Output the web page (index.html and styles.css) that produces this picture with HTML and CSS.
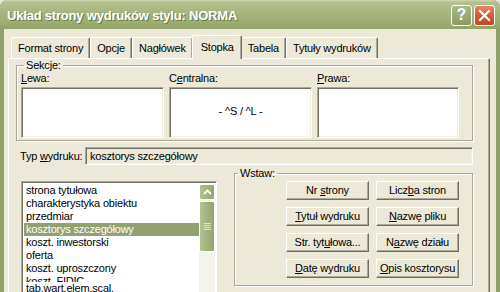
FILE: index.html
```html
<!DOCTYPE html>
<html lang="pl">
<head>
  <meta charset="UTF-8" />
  <title>Układ strony wydruków stylu: NORMA</title>
  <link rel="stylesheet" href="styles.css">
</head>
<body>
  <div class="window">
    <div class="titlebar">
      <span class="title">Układ strony wydruków stylu: NORMA</span>
      <span class="cap-btn help">?</span>
      <span class="cap-btn close">
        <svg width="13" height="13" viewBox="0 0 13 13">
          <path d="M2 2 L11 11 M11 2 L2 11" stroke="#fff" stroke-width="2.2" stroke-linecap="square" />
        </svg>
      </span>
    </div>

    <div class="client">
      <div class="tabs">
        <div class="tab">Format strony</div>
        <div class="tab">Opcje</div>
        <div class="tab">Nagłówek</div>
        <div class="tab active">Stopka</div>
        <div class="tab">Tabela</div>
        <div class="tab">Tytuły wydruków</div>
      </div>

      <div class="panel">
        <fieldset class="group sections">
          <legend>Sekcje:</legend>
          <div class="section-grid">
            <div class="section">
              <label><u>L</u>ewa:</label>
              <div class="edit"></div>
            </div>
            <div class="section">
              <label>C<u>e</u>ntralna:</label>
              <div class="edit centered">- ^S / ^L -</div>
            </div>
            <div class="section">
              <label><u>P</u>rawa:</label>
              <div class="edit"></div>
            </div>
          </div>
        </fieldset>

        <div class="type-row">
          <label>Typ <u>w</u>ydruku:</label>
          <div class="edit readonly">kosztorys szczegółowy</div>
        </div>

        <div class="lower">
          <div class="listbox">
            <div class="items">
              <div class="item">strona tytułowa</div>
              <div class="item">charakterystyka obiektu</div>
              <div class="item">przedmiar</div>
              <div class="item selected">kosztorys szczegółowy</div>
              <div class="item">koszt. inwestorski</div>
              <div class="item">oferta</div>
              <div class="item">koszt. uproszczony</div>
              <div class="item">koszt. FIDIC</div>
              <div class="item overlap">tab.wart.elem.scal.</div>
            </div>
            <div class="scrollbar">
              <div class="sb-btn">
                <svg width="9" height="6" viewBox="0 0 9 6">
                  <path d="M1 5 L4.5 1.5 L8 5" fill="none" stroke="#fff" stroke-width="2" />
                </svg>
              </div>
              <div class="sb-thumb"><span class="grip"></span></div>
            </div>
          </div>

          <fieldset class="group insert">
            <legend>Wstaw:</legend>
            <div class="btn-grid">
              <div class="btn"><span>Nr <u>s</u>trony</span></div>
              <div class="btn"><span>Licz<u>b</u>a stron</span></div>
              <div class="btn"><span><u>T</u>ytuł wydruku</span></div>
              <div class="btn"><span><u>N</u>azwę pliku</span></div>
              <div class="btn"><span>Str. tyt<u>u</u>łowa...</span></div>
              <div class="btn"><span>N<u>a</u>zwę działu</span></div>
              <div class="btn"><span><u>D</u>atę wydruku</span></div>
              <div class="btn"><span><u>O</u>pis kosztorysu</span></div>
            </div>
          </fieldset>
        </div>
      </div>
    </div>
  </div>
</body>
</html>
```

FILE: styles.css
```css
body {
  margin: 0;
  background-color: #ece9d8;
  font-family: 'Liberation Sans', Arial, sans-serif;
  font-size: 11px;
  letter-spacing: -0.2px;
  color: #000;
  overflow: hidden;
}

u {
  text-decoration: underline;
  text-underline-offset: 1px;
}

.window {
  width: 500px;
  height: 292px;
  display: flex;
  flex-direction: column;
  background-color: #8fa06a;
  border-radius: 7px 7px 0 0;
  overflow: hidden;
}

/* Titelleiste */
.titlebar {
  height: 29px;
  flex-shrink: 0;
  display: flex;
  align-items: center;
  gap: 2px;
  padding: 1px 5px 0 7px;
  box-sizing: border-box;
  background: linear-gradient(#d2dab4 0, #b4c18e 2px, #a7b67f 40%, #9eae73 75%, #93a468 100%);
}

.title {
  flex: 1;
  color: #fff;
  font-size: 13px;
  font-weight: bold;
  letter-spacing: -0.2px;
  text-shadow: 1px 1px 0 #6b7a45;
}

.cap-btn {
  width: 21px;
  height: 21px;
  box-sizing: border-box;
  border: 1px solid #fff;
  border-radius: 3px;
  display: flex;
  align-items: center;
  justify-content: center;
  color: #fff;
  font-size: 16px;
  font-weight: bold;
  letter-spacing: 0;
}

.help {
  background: linear-gradient(#a9b98a, #8a9b60);
}

.close {
  background: linear-gradient(#e6876a, #d25a32 50%, #c5471f);
}

/* Fensterinhalt */
.client {
  flex: 1;
  margin: 0 4px;
  background-color: #ece9d8;
  padding-top: 8px;
  display: flex;
  flex-direction: column;
}

.tabs {
  display: flex;
  padding-left: 7px;
  height: 21px;
}

.tab {
  height: 21px;
  line-height: 20px;
  padding: 0 6px 0 6px;
  box-sizing: border-box;
  border-top: 1px solid #fff;
  border-left: 1px solid #fff;
  border-right: 1px solid #716f64;
  box-shadow: inset -1px 0 0 #aca899;
  border-radius: 2px 2px 0 0;
}

.tab.active {
  height: 24px;
  margin: -2px -1px 0 -1px;
  padding: 1px 7px 0 8px;
  background-color: #ece9d8;
  position: relative;
  z-index: 1;
}

.panel {
  flex: 1;
  margin: 0 6px 0 4px;
  border-top: 1px solid #fff;
  border-left: 1px solid #fff;
  border-right: 1px solid #716f64;
  box-shadow: inset -1px 0 0 #aca899;
  padding: 0 16px 0 7px;
}

/* Gruppenrahmen */
.group {
  margin: 0;
  border: 1px solid #aca899;
  box-shadow: 1px 1px 0 #fff, inset 1px 1px 0 #fff;
}

.group legend {
  padding: 0 2px;
  margin-left: 3px;
  line-height: 12px;
}

.sections {
  padding: 0 0 2px 4px;
}

.section-grid {
  display: grid;
  grid-template-columns: 143px 143px 142px;
  column-gap: 5px;
}

.section label {
  display: block;
  line-height: 13px;
  padding-top: 1px;
  margin-bottom: 2px;
}

.edit {
  box-sizing: border-box;
  background-color: #fff;
  border: 1px solid;
  border-color: #aca899 #fff #fff #aca899;
  box-shadow: inset 1px 1px 0 #716f64, inset -1px -1px 0 #f1efe2;
}

.section .edit {
  height: 51px;
}

.edit.centered {
  display: flex;
  align-items: center;
  justify-content: center;
  padding-bottom: 4px;
}

.type-row {
  display: flex;
  align-items: center;
  margin-top: 6px;
  padding-left: 4px;
}

.type-row label {
  width: 65px;
}

.edit.readonly {
  flex: 1;
  height: 18px;
  line-height: 16px;
  padding-left: 4px;
  background-color: #ece9d8;
}

.lower {
  display: flex;
  align-items: flex-start;
}

/* Liste */
.listbox {
  width: 196px;
  height: 120px;
  margin: 16px 0 0 5px;
  display: flex;
  box-sizing: border-box;
  background-color: #fff;
  border: 1px solid;
  border-color: #aca899 #fff #fff #aca899;
  box-shadow: inset 1px 1px 0 #716f64;
  padding: 2px 1px 0 2px;
}

.items {
  flex: 1;
  overflow: hidden;
}

.item {
  height: 13px;
  line-height: 13px;
  padding-left: 2px;
  white-space: nowrap;
}

.item.selected {
  background-color: #93a070;
  color: #fff;
}

.item.overlap {
  margin-top: -6px;
  background-color: #fff;
  position: relative;
}

.scrollbar {
  width: 16px;
  background-color: #f4f4ec;
}

.sb-btn,
.sb-thumb {
  box-sizing: border-box;
  border: 1px solid #fff;
  border-radius: 2px;
  background: linear-gradient(to right, #b3c293, #a3b37d 50%, #95a56c);
  display: flex;
  align-items: center;
  justify-content: center;
}

.sb-btn {
  height: 16px;
}

.sb-thumb {
  height: 51px;
  margin-top: 1px;
}

.grip {
  width: 7px;
  height: 7px;
  background: repeating-linear-gradient(#dde5c8 0, #dde5c8 1px, transparent 1px, transparent 2px);
}

/* Einfügen-Gruppe */
.insert {
  flex: 1;
  margin: 2px 0 0 17px;
  padding: 2px 13px 7px 0;
}

.btn-grid {
  display: grid;
  grid-template-columns: 83px 83px;
  grid-auto-rows: 19px;
  gap: 7px;
  justify-content: end;
}

.btn {
  box-sizing: border-box;
  display: flex;
  align-items: center;
  justify-content: center;
  background-color: #ece9d8;
  border: 1px solid;
  border-color: #fff #716f64 #716f64 #fff;
  box-shadow: inset -1px -1px 0 #aca899;
  padding-bottom: 1px;
  white-space: nowrap;
}
```
